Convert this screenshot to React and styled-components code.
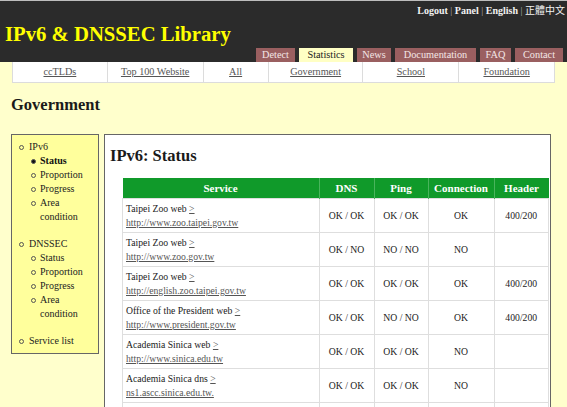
import React from "react";
import styled, { createGlobalStyle } from "styled-components";

const Global = createGlobalStyle`
  html, body { margin: 0; padding: 0; }
  body {
    background: #ffffcc;
    font-family: "Liberation Serif", "Noto Sans CJK TC", serif;
    color: #222;
    width: 567px;
    overflow: hidden;
  }
`;

const Page = styled.div`
  width: 567px;
  height: 407px;
  overflow: hidden;
  background: #ffffcc;
`;

const Header = styled.header`
  height: 62px;
  background: #2b2b2b;
  border-top: 1px solid #bdbdbd;
  display: flex;
  flex-direction: column;
  box-sizing: border-box;
`;

const TopLinks = styled.div`
  height: 17px;
  line-height: 17px;
  font-size: 10px;
  font-weight: bold;
  color: #f2f2f2;
  text-align: right;
  padding-right: 2px;
  span.sep { color: #aaa; font-weight: normal; margin: 0 2.5px; }
  span.cjk { font-family: "Noto Sans CJK TC", sans-serif; font-weight: normal; font-size: 10px; }
`;

const Title = styled.h1`
  margin: 6px 0 0 5px;
  font-size: 20.7px;
  line-height: 21px;
  font-weight: bold;
  color: #ffff00;
`;

const Tabs = styled.nav`
  display: flex;
  gap: 4px;
  align-self: flex-end;
  margin: 3px 4px 0 0;
`;

const Tab = styled.a`
  width: ${(p) => p.$w}px;
  height: 14px;
  line-height: 14px;
  font-size: 10.3px;
  text-align: center;
  background: ${(p) => (p.$active ? "#ffffc4" : "#9a5f60")};
  color: ${(p) => (p.$active ? "#222" : "#f4e6e6")};
`;

const SubNav = styled.div`
  display: flex;
  margin: 0 12px;
  height: 21px;
  background: #fff;
  border: 1px solid #dcdcdc;
  border-top: none;
  box-sizing: border-box;
`;

const SubItem = styled.a`
  width: ${(p) => p.$w}px;
  line-height: 20px;
  font-size: 10.2px;
  text-align: center;
  color: #555;
  text-decoration: underline;
  border-right: 1px solid #dcdcdc;
  &:last-child { border-right: none; }
`;

const PageHeading = styled.h2`
  margin: 12px 0 19px 11px;
  font-size: 16.5px;
  line-height: 20px;
  font-weight: bold;
  color: #1a1a1a;
`;

const Columns = styled.div`
  display: flex;
  align-items: flex-start;
  gap: 5px;
  padding: 0 16px 0 11px;
`;

const Sidebar = styled.aside`
  width: 88px;
  box-sizing: border-box;
  background: #ffff9c;
  border: 1px solid #666;
  padding: 5px 0 5px 0;
  font-size: 10px;
  line-height: 14px;
`;

const Menu = styled.ul`
  list-style: none;
  margin: 0;
  padding: 0;
`;

const Group = styled.li`
  position: relative;
  padding-left: 17px;
  margin-bottom: ${(p) => (p.$last ? 0 : 13)}px;
  color: #222;
`;

const SubMenu = styled.ul`
  list-style: none;
  margin: 0;
  padding: 0;
`;

const Bullet = styled.span`
  position: absolute;
  left: ${(p) => p.$x}px;
  top: 5px;
  width: 3px;
  height: 3px;
  border-radius: 50%;
  border: 1px solid #555;
  background: ${(p) => (p.$filled ? "#111" : "transparent")};
`;

const Item = styled.li`
  position: relative;
  padding-left: 11px;
  font-weight: ${(p) => (p.$active ? "bold" : "normal")};
  color: ${(p) => (p.$active ? "#111" : "#222")};
`;

const Main = styled.main`
  flex: 1;
  min-height: 300px;
  box-sizing: border-box;
  background: #fff;
  border: 1px solid #666;
  padding: 11px 0 0 5px;
`;

const MainHeading = styled.h3`
  margin: 0 0 12px 0;
  font-size: 16.5px;
  line-height: 20px;
  font-weight: bold;
  color: #1a1a1a;
`;

const Table = styled.table`
  margin-left: 12px;
  width: 422px;
  border-collapse: collapse;
  table-layout: fixed;
  font-size: 9.7px;
  line-height: 14px;
`;

const Th = styled.th`
  width: ${(p) => p.$w}px;
  height: 20px;
  padding: 0;
  background: #109a2a;
  color: #fff;
  font-size: 11px;
  font-weight: bold;
  text-align: center;
  border-left: 1px solid #49b45c;
  &:first-child { border-left: none; }
`;

const Td = styled.td`
  height: 28px;
  padding: 2.5px 3px;
  border: 1px solid #dedede;
  text-align: ${(p) => (p.$left ? "left" : "center")};
  vertical-align: middle;
  color: #222;
`;

const Link = styled.a`
  color: #555;
  text-decoration: underline;
`;

const tabs = [
  ["Detect", 39],
  ["Statistics", 54, true],
  ["News", 34],
  ["Documentation", 81],
  ["FAQ", 31],
  ["Contact", 48],
];

const sub = [
  ["ccTLDs", 95],
  ["Top 100 Website", 96],
  ["All", 65],
  ["Government", 95],
  ["School", 96],
  ["Foundation", 96],
];

const rows = [
  ["Taipei Zoo web", "http://www.zoo.taipei.gov.tw", "OK / OK", "OK / OK", "OK", "400/200"],
  ["Taipei Zoo web", "http://www.zoo.gov.tw", "OK / NO", "NO / NO", "NO", ""],
  ["Taipei Zoo web", "http://english.zoo.taipei.gov.tw", "OK / OK", "OK / OK", "OK", "400/200"],
  ["Office of the President web", "http://www.president.gov.tw", "OK / OK", "NO / NO", "OK", "400/200"],
  ["Academia Sinica web", "http://www.sinica.edu.tw", "OK / OK", "OK / OK", "NO", ""],
  ["Academia Sinica dns", "ns1.ascc.sinica.edu.tw.", "OK / OK", "OK / OK", "NO", ""],
];

const subItems = ["Status", "Proportion", "Progress", "Area condition"];

export default function App() {
  return (
    <Page>
      <Global />
      <Header>
        <TopLinks>
          Logout<span className="sep">|</span>Panel<span className="sep">|</span>English
          <span className="sep">|</span>
          <span className="cjk">正體中文</span>
        </TopLinks>
        <Title>IPv6 &amp; DNSSEC Library</Title>
        <Tabs>
          {tabs.map(([t, w, a]) => (
            <Tab key={t} $w={w} $active={a}>
              {t}
            </Tab>
          ))}
        </Tabs>
      </Header>
      <SubNav>
        {sub.map(([t, w]) => (
          <SubItem key={t} $w={w}>
            {t}
          </SubItem>
        ))}
      </SubNav>
      <PageHeading>Government</PageHeading>
      <Columns>
        <Sidebar>
          <Menu>
            <Group>
              <Bullet $x={7} />
              IPv6
              <SubMenu>
                {subItems.map((s, i) => (
                  <Item key={s} $active={i === 0}>
                    <Bullet $x={2} $filled={i === 0} />
                    {s}
                  </Item>
                ))}
              </SubMenu>
            </Group>
            <Group>
              <Bullet $x={7} />
              DNSSEC
              <SubMenu>
                {subItems.map((s) => (
                  <Item key={s}>
                    <Bullet $x={2} />
                    {s}
                  </Item>
                ))}
              </SubMenu>
            </Group>
            <Group $last>
              <Bullet $x={7} />
              Service list
            </Group>
          </Menu>
        </Sidebar>
        <Main>
          <MainHeading>IPv6: Status</MainHeading>
          <Table>
            <thead>
              <tr>
                <Th $w={196}>Service</Th>
                <Th $w={54}>DNS</Th>
                <Th $w={53}>Ping</Th>
                <Th $w={65}>Connection</Th>
                <Th $w={54}>Header</Th>
              </tr>
            </thead>
            <tbody>
              {rows.map((r, i) => (
                <tr key={i}>
                  <Td $left>
                    {r[0]} <Link>&gt;</Link>
                    <br />
                    <Link>{r[1]}</Link>
                  </Td>
                  <Td>{r[2]}</Td>
                  <Td>{r[3]}</Td>
                  <Td>{r[4]}</Td>
                  <Td>{r[5]}</Td>
                </tr>
              ))}
              <tr>
                <Td $left />
                <Td />
                <Td />
                <Td />
                <Td />
              </tr>
            </tbody>
          </Table>
        </Main>
      </Columns>
    </Page>
  );
}
